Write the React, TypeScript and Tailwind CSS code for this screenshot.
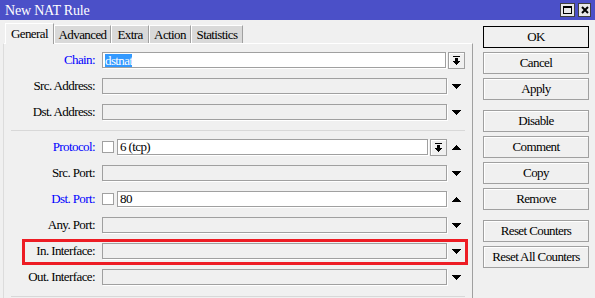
import React from "react";

function Tri({ up }: { up?: boolean }) {
  const rows = [
    [0, 9],
    [1, 7],
    [2, 5],
    [3, 3],
    [4, 1],
  ];
  return (
    <svg width="9" height="5" viewBox="0 0 9 5" shapeRendering="crispEdges">
      {rows.map(([x, w], i) => (
        <rect key={i} x={x} y={up ? 4 - i : i} width={w} height={1} fill="#000" />
      ))}
    </svg>
  );
}

function DropBtn() {
  return (
    <div className="w-[17px] h-[17px] shrink-0 border border-[#a0a0a0] bg-[#f0f0f0] shadow-[inset_1px_1px_0_#fff] flex items-center justify-center">
      <svg width="7" height="9" viewBox="0 0 7 9" shapeRendering="crispEdges">
        <rect x="0" y="0" width="7" height="1" fill="#000" />
        <rect x="2" y="2" width="3" height="3" fill="#000" />
        <rect x="0" y="5" width="7" height="1" fill="#000" />
        <rect x="1" y="6" width="5" height="1" fill="#000" />
        <rect x="2" y="7" width="3" height="1" fill="#000" />
        <rect x="3" y="8" width="1" height="1" fill="#000" />
      </svg>
    </div>
  );
}

function Field({ white, children }: { white?: boolean; children?: React.ReactNode }) {
  return (
    <div
      className={`h-[16px] flex-1 min-w-0 border border-[#a0a0a0] shadow-[1px_1px_0_#fff] flex items-center pl-[2px] ${
        white ? "bg-white" : "bg-[#f0f0f0]"
      }`}
    >
      {children}
    </div>
  );
}

function Check() {
  return <div className="w-[12px] h-[12px] shrink-0 border border-[#a0a0a0] bg-white mr-[3px]" />;
}

function Row({
  label,
  blue,
  children,
  trailing,
  noTrail,
  highlight,
}: {
  label: string;
  blue?: boolean;
  children?: React.ReactNode;
  trailing?: React.ReactNode;
  noTrail?: boolean;
  highlight?: boolean;
}) {
  return (
    <div className="relative flex items-center h-[16px]">
      <div
        className={`w-[91px] mr-[7px] text-right whitespace-nowrap leading-[16px] ${
          blue ? "text-[#0000ff]" : "text-black"
        }`}
      >
        {label}
      </div>
      <div className="flex-1 flex items-center h-full">{children}</div>
      {!noTrail && <div className="w-[18px] h-full flex items-center pl-[5px]">{trailing}</div>}
      {highlight && (
        <div className="absolute left-[18px] right-[-3px] top-[-4px] bottom-[-6px] border-[3px] border-[#ed1c24] pointer-events-none" />
      )}
    </div>
  );
}

function Btn({ children, def, className = "" }: { children: React.ReactNode; def?: boolean; className?: string }) {
  return (
    <div
      className={`h-[22px] w-full flex items-center justify-center border ${
        def ? "border-black" : "border-[#a0a0a0] shadow-[inset_1px_1px_0_#fff]"
      } bg-[#f0f0f0] text-black ${className}`}
    >
      {children}
    </div>
  );
}

function Tab({ label, active, w }: { label: string; active?: boolean; w: string }) {
  return (
    <div
      className={`${w} flex items-center justify-center border-l border-t border-r border-l-white border-t-white border-r-[#a0a0a0] ${
        active ? "h-[21px] bg-[#f0f0f0] relative z-10" : "h-[18px] mt-[2px] bg-[#d9d9d9]"
      }`}
    >
      {label}
    </div>
  );
}

export default function App() {
  return (
    <div className="w-[595px] h-[298px] overflow-hidden bg-[#f0f0f0] font-['Liberation_Serif',serif] text-[13px] tracking-[-0.6px] text-black">
      {/* Title bar */}
      <div className="h-[20px] bg-[#4b50c8] flex items-center justify-between pl-[5px] pr-[4px]">
        <span className="text-white text-[14px] tracking-[-0.2px]">New NAT Rule</span>
        <div className="flex gap-[3px]">
          <div className="w-[15px] h-[14px] bg-[#e8e8e8] border border-[#404040] flex items-center justify-center">
            <svg width="9" height="8" viewBox="0 0 9 8" shapeRendering="crispEdges">
              <rect x="0.5" y="0.5" width="8" height="7" fill="none" stroke="#000" />
              <rect x="0" y="0" width="9" height="2" fill="#000" />
            </svg>
          </div>
          <div className="w-[13px] h-[14px] bg-[#e8e8e8] border border-[#404040] flex items-center justify-center">
            <svg width="8" height="8" viewBox="0 0 8 8">
              <path d="M1 1 L7 7 M7 1 L1 7" stroke="#000" strokeWidth="2" />
            </svg>
          </div>
        </div>
      </div>

      {/* Body */}
      <div className="flex h-[278px]">
        <div className="w-[473px] flex flex-col pt-[3px]">
          <div className="h-[20px] flex items-start pl-[5px]">
            <Tab label="General" active w="w-[49px]" />
            <Tab label="Advanced" w="w-[57px]" />
            <Tab label="Extra" w="w-[38px]" />
            <Tab label="Action" w="w-[42px]" />
            <Tab label="Statistics" w="w-[52px]" />
          </div>
          <div className="ml-[3px] w-[470px] flex-1 border-t border-l border-r border-t-white border-l-[#dcdcdc] border-r-[#a0a0a0] pt-[8px] pr-[7px]">
            <div className="flex flex-col gap-[10px]">
              <Row label="Chain:" blue noTrail>
                <Field white>
                  <span className="bg-[#3399ff] text-white leading-[13px]">dstnat</span>
                </Field>
                <div className="w-[2px]" />
                <DropBtn />
              </Row>
              <Row label="Src. Address:" trailing={<Tri />}>
                <Field />
              </Row>
              <Row label="Dst. Address:" trailing={<Tri />}>
                <Field />
              </Row>
            </div>
            <div className="ml-[7px] mt-[10px] mb-[8px] h-px bg-[#d8d8d8]" />
            <div className="flex flex-col gap-[10px]">
              <Row label="Protocol:" blue trailing={<Tri up />}>
                <Check />
                <Field white>
                  <span>6 (tcp)</span>
                </Field>
                <div className="w-[2px]" />
                <DropBtn />
              </Row>
              <Row label="Src. Port:" trailing={<Tri />}>
                <Field />
              </Row>
              <Row label="Dst. Port:" blue trailing={<Tri up />}>
                <Check />
                <Field white>
                  <span>80</span>
                </Field>
              </Row>
              <Row label="Any. Port:" trailing={<Tri />}>
                <Field />
              </Row>
              <Row label="In. Interface:" trailing={<Tri />} highlight>
                <Field />
              </Row>
              <Row label="Out. Interface:" trailing={<Tri />}>
                <Field />
              </Row>
            </div>
            <div className="ml-[7px] mt-[11px] h-px bg-[#d8d8d8]" />
          </div>
        </div>

        {/* Buttons */}
        <div className="w-[106px] ml-[10px] pt-[6px] flex flex-col">
          <Btn def>OK</Btn>
          <Btn className="mt-[4px]">Cancel</Btn>
          <Btn className="mt-[4px]">Apply</Btn>
          <Btn className="mt-[10px]">Disable</Btn>
          <Btn className="mt-[4px]">Comment</Btn>
          <Btn className="mt-[4px]">Copy</Btn>
          <Btn className="mt-[4px]">Remove</Btn>
          <Btn className="mt-[10px]">Reset Counters</Btn>
          <Btn className="mt-[4px]">Reset All Counters</Btn>
        </div>
      </div>
    </div>
  );
}
